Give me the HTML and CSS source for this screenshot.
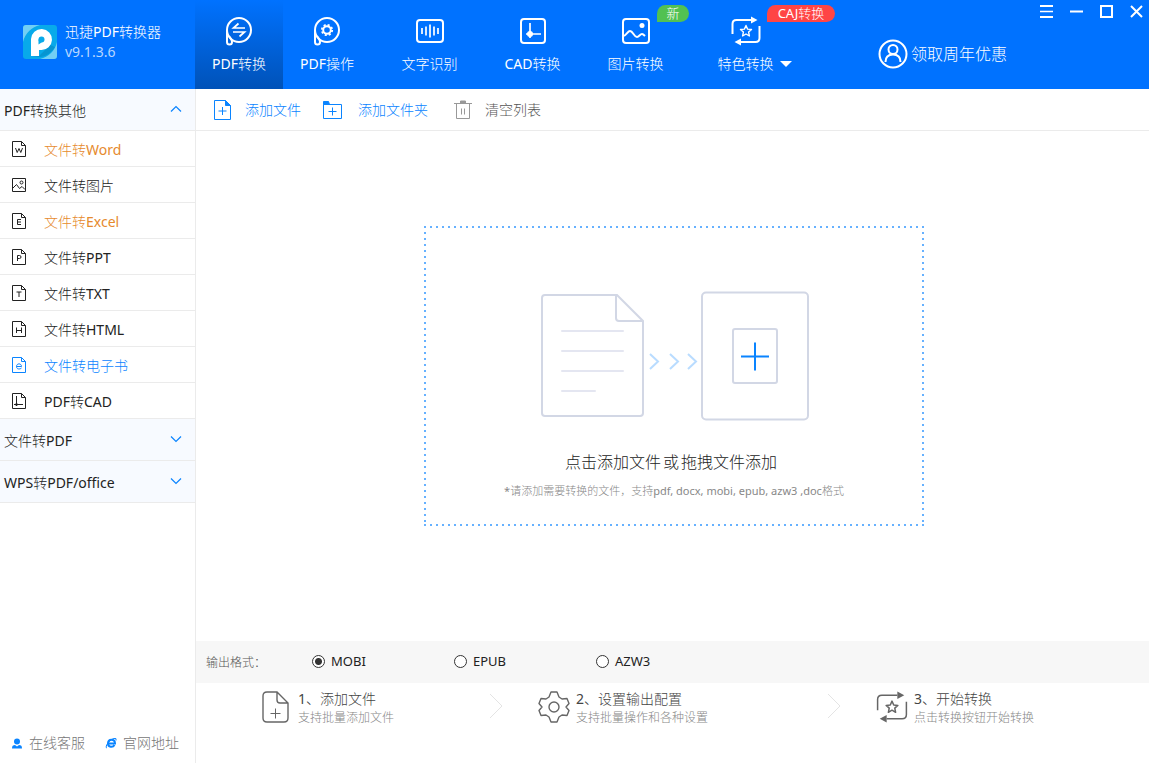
FILE: index.html
```html
<!DOCTYPE html>
<html lang="zh-CN">
<head>
<meta charset="utf-8">
<meta name="viewport" content="width=device-width, initial-scale=1">
<title>迅捷PDF转换器</title>
<link rel="stylesheet" href="styles.css">
</head>
<body>
<svg class="defs" aria-hidden="true">
  <symbol id="page" viewBox="0 0 16 18">
    <path d="M1.5 1.5h9l4 4v11h-13z" fill="none" stroke="currentColor" stroke-linejoin="round"/>
    <path d="M10.5 1.5v4h4" fill="none" stroke="currentColor"/>
  </symbol>
  <symbol id="swap" viewBox="0 0 30 30">
    <path d="M1.500 18V8q0-4 4-4H20M28.500 10v12q0 4-4 4H10" fill="none" stroke="currentColor"/>
    <path d="M20 .5l6.500 3.500-6.500 3.500zM10 22.500L3.500 26l6.500 3.500z" fill="currentColor"/>
    <path d="M15 9.500l1.600 3.600 3.900.4-2.900 2.600.8 3.900-3.400-2-3.400 2 .8-3.900-2.900-2.600 3.900-.4z" fill="none" stroke="currentColor" stroke-width="1.400" stroke-linejoin="round"/>
  </symbol>
  <symbol id="chevron" viewBox="0 0 12 8">
    <path d="M1 1.500l5 5 5-5" fill="none" stroke="currentColor" stroke-width="1.200"/>
  </symbol>
  <symbol id="arrow" viewBox="0 0 14 26">
    <path d="M1 1l12 12L1 25" fill="none" stroke="currentColor"/>
  </symbol>
</svg>

<div class="app">
  <header class="header">
    <div class="brand">
      <svg class="brand-logo" viewBox="0 0 34 34" aria-hidden="true">
        <rect width="34" height="34" rx="3" fill="#08aaea"/>
        <path d="M3 0h14A23 23 0 0 0 0 17V3a3 3 0 0 1 3-3zM34 17v14a3 3 0 0 1-3 3H17A22 22 0 0 0 34 17z" fill="#72cff4"/>
        <path d="M16 31l11-11 5 2c-3 5-8 9-14 10H10z" fill="#0795d1"/>
        <path d="M8 31V14a10.500 10.500 0 1 1 10 11h-2v6z" fill="#fff"/>
        <circle cx="18.500" cy="14.500" r="3" fill="#08aaea"/>
        <path d="M15.500 14.500h3v3l-3 2z" fill="#08aaea"/>
      </svg>
      <div class="brand-text">
        <h1 class="brand-name">迅捷PDF转换器</h1>
        <span class="brand-version">v9.1.3.6</span>
      </div>
    </div>
    <nav class="nav">
      <button class="nav-item active" type="button">
        <svg class="nav-icon" viewBox="0 0 30 30" fill="none" stroke="currentColor" stroke-width="2" aria-hidden="true">
          <circle cx="15" cy="14" r="12"/>
          <path d="M3 14v12q0 2.500 2.500 2.500T8 26q0-2-3-6"/>
          <path d="M21 12H9.500L14.500 7.500M9 16h11.500L15.500 20.500" stroke-width="1.700"/>
        </svg>
        <span class="nav-label">PDF转换</span>
      </button>
      <button class="nav-item" type="button">
        <svg class="nav-icon" viewBox="0 0 30 30" fill="none" stroke="currentColor" stroke-width="2" aria-hidden="true">
          <circle cx="15" cy="14" r="12"/>
          <path d="M3 14v12q0 2.500 2.500 2.500T8 26q0-2-3-6"/>
          <circle cx="15" cy="14" r="3.800"/>
          <circle cx="15" cy="14" r="5.200" stroke-width="1.800" stroke-dasharray="2.084 2"/>
        </svg>
        <span class="nav-label">PDF操作</span>
      </button>
      <button class="nav-item wide first" type="button">
        <svg class="nav-icon" viewBox="0 0 30 30" fill="none" stroke="currentColor" stroke-width="2" aria-hidden="true">
          <rect x="2" y="4" width="26" height="22" rx="3"/>
          <path d="M7 12v6M11 10.500v9M15 8.500v13M19 10.500v9M23 12v6" stroke-width="1.700"/>
        </svg>
        <span class="nav-label">文字识别</span>
      </button>
      <button class="nav-item wide" type="button">
        <svg class="nav-icon" viewBox="0 0 30 30" fill="none" stroke="currentColor" stroke-width="2" aria-hidden="true">
          <rect x="3" y="3" width="24" height="24" rx="3"/>
          <path d="M12 7v15M8 18h15" stroke-width="1.700"/>
          <circle cx="12" cy="18" r="3" fill="currentColor" stroke="none"/>
        </svg>
        <span class="nav-label">CAD转换</span>
      </button>
      <button class="nav-item wide" type="button">
        <svg class="nav-icon" viewBox="0 0 30 30" fill="none" stroke="currentColor" stroke-width="2" aria-hidden="true">
          <rect x="2" y="3" width="26" height="24" rx="3"/>
          <path d="M3 20c3-2 4-5 6-5 3 0 4 6 7 6 2 0 3-3 5-3 1 0 2 1 3 2"/>
          <circle cx="21" cy="9.500" r="2.500" fill="currentColor" stroke="none"/>
        </svg>
        <span class="nav-label">图片转换</span>
        <span class="badge green">新</span>
      </button>
      <button class="nav-item special" type="button">
        <svg class="nav-icon" aria-hidden="true"><use href="#swap"/></svg>
        <span class="nav-label">特色转换<span class="caret"></span></span>
        <span class="badge red">CAJ转换</span>
      </button>
    </nav>
    <button class="promo" type="button">
      <svg class="promo-icon" viewBox="0 0 30 30" fill="none" stroke="currentColor" stroke-width="2" aria-hidden="true">
        <circle cx="15" cy="15" r="13.500"/>
        <circle cx="15" cy="10.500" r="4.500"/>
        <path d="M7.500 23c0-5 3-7.500 7.500-7.500s7.500 2.500 7.500 7.500"/>
      </svg>
      领取周年优惠
    </button>
    <div class="window-controls">
      <button class="window-button" type="button" aria-label="菜单"><svg viewBox="0 0 14 14"><path d="M0 1h13M0 12h13"/><path d="M0 6.500h13" stroke-width="1.500"/></svg></button>
      <button class="window-button" type="button" aria-label="最小化"><svg viewBox="0 0 14 14"><path d="M0 6.500h13"/></svg></button>
      <button class="window-button" type="button" aria-label="最大化"><svg viewBox="0 0 14 14"><path d="M1 1h11v11H1z"/></svg></button>
      <button class="window-button" type="button" aria-label="关闭"><svg viewBox="0 0 14 14"><path d="M1 1l11 11M12 1L1 12"/></svg></button>
    </div>
  </header>

  <div class="body">
    <aside class="sidebar">
      <button class="group" type="button" aria-expanded="true">PDF转换其他<svg class="group-icon up" aria-hidden="true"><use href="#chevron"/></svg></button>
      <ul class="menu">
        <li><a class="menu-item hot" href="#word"><svg class="menu-icon" viewBox="0 0 16 18" aria-hidden="true"><use href="#page"/><path d="M4.500 8l1.700 4.500L8 8.500l1.800 4L11.500 8"/></svg>文件转Word</a></li>
        <li><a class="menu-item" href="#image"><svg class="menu-icon" viewBox="0 0 16 18" aria-hidden="true"><path d="M1.500 2.500h13v13h-13zM2 12l3.500-3.500 3 4 2.500-2 3 3"/><circle cx="10.500" cy="6.500" r="1.500"/></svg>文件转图片</a></li>
        <li><a class="menu-item hot" href="#excel"><svg class="menu-icon" viewBox="0 0 16 18" aria-hidden="true"><use href="#page"/><path d="M10 7.500H6.500v5H10M6.500 10H10"/></svg>文件转Excel</a></li>
        <li><a class="menu-item" href="#ppt"><svg class="menu-icon" viewBox="0 0 16 18" aria-hidden="true"><use href="#page"/><path d="M6.500 13V7.500h2q1.500 0 1.500 1.500t-1.500 1.500h-2"/></svg>文件转PPT</a></li>
        <li><a class="menu-item" href="#txt"><svg class="menu-icon" viewBox="0 0 16 18" aria-hidden="true"><use href="#page"/><path d="M5.500 8h5M8 8v5"/></svg>文件转TXT</a></li>
        <li><a class="menu-item" href="#html"><svg class="menu-icon" viewBox="0 0 16 18" aria-hidden="true"><use href="#page"/><path d="M5.500 7.500V13M10.500 7.500V13M5.500 10.500h5"/></svg>文件转HTML</a></li>
        <li><a class="menu-item current" href="#ebook" aria-current="page"><svg class="menu-icon" viewBox="0 0 16 18" aria-hidden="true"><use href="#page"/><path d="M5.500 10.500h5c0-3.500-5-3.500-5 0 0 3 3.500 3 5 1.500"/></svg>文件转电子书</a></li>
        <li><a class="menu-item" href="#cad"><svg class="menu-icon" viewBox="0 0 16 18" aria-hidden="true"><use href="#page"/><path d="M5.500 4v10M3 12.500h9"/><circle cx="5.500" cy="12.500" r="1"/></svg>PDF转CAD</a></li>
      </ul>
      <button class="group" type="button" aria-expanded="false">文件转PDF<svg class="group-icon" aria-hidden="true"><use href="#chevron"/></svg></button>
      <button class="group" type="button" aria-expanded="false">WPS转PDF/office<svg class="group-icon" aria-hidden="true"><use href="#chevron"/></svg></button>
      <div class="support">
        <a class="support-link" href="#service">
          <svg class="support-icon" viewBox="0 0 12 12" aria-hidden="true"><circle cx="6" cy="4.500" r="3" fill="currentColor"/><path d="M1 11.500c0-3 1-3.500 3-3.500l2 1.500L8 8c2 0 3 .5 3 3.500z" fill="currentColor"/></svg>
          在线客服
        </a>
        <a class="support-link" href="#site">
          <svg class="support-icon" viewBox="0 0 12 12" fill="none" stroke="currentColor" aria-hidden="true"><path d="M3 6.500h7c0-5-7-5-7 0 0 4 5 4 6.500 1.500" stroke-width="2"/><path d="M2 11C-.5 11 3 3 9 1.500q3-.7 2 2" /></svg>
          官网地址
        </a>
      </div>
    </aside>

    <main class="main">
      <div class="toolbar">
        <button class="tool add-file" type="button">
          <svg class="tool-icon" viewBox="0 0 20 22" aria-hidden="true"><path d="M1.500 1.500h11l5 5v14h-16zM9.500 8v8M5.500 12h8"/><path d="M12.500 1.500v5h5z" fill="currentColor"/></svg>添加文件
        </button>
        <button class="tool add-folder" type="button">
          <svg class="tool-icon" viewBox="0 0 20 22" aria-hidden="true"><path d="M.5 5.500h18v14H.5zM9.500 8.500v8M5.500 12.500h8"/><path d="M.5 5.500v-3h5l1 3z" fill="currentColor"/></svg>添加文件夹
        </button>
        <button class="tool clear" type="button">
          <svg class="tool-icon" viewBox="0 0 20 22" aria-hidden="true"><path d="M1 4.500h18M3.500 4.500v15h13v-15M8.500 9.500v6M11.500 9.500v6"/><path d="M7.500 4V2h5v2z" fill="currentColor"/></svg><span class="clear-text">清空列表</span>
        </button>
      </div>

      <section class="workspace">
        <button class="dropzone" type="button">
          <svg class="drop-art" viewBox="0 0 268 130" fill="none" stroke="#d2d7e5" stroke-width="2" aria-hidden="true">
            <path d="M76 4H4Q1 4 1 7v115q0 3 3 3h95q3 0 3-3V30zM75 4v23q0 3 3 3h24"/>
            <path d="M21 40h61M21 60h61M21 80h61M21 100h33" stroke="#e4e6f1" stroke-linecap="round"/>
            <path d="M109 63l8 7.500-8 7.500M129 63l8 7.500-8 7.500M147 63l8 7.500-8 7.500" stroke="#b9dcff"/>
            <rect x="161" y="1.500" width="106" height="127" rx="4"/>
            <rect x="192" y="38" width="44" height="54" rx="2"/>
            <path d="M200 65.500h28M214 51.500v28" stroke="#0a84ff"/>
          </svg>
          <span class="drop-title">点击添加文件<span class="drop-or">或</span>拖拽文件添加</span>
          <span class="drop-hint">*请添加需要转换的文件，支持pdf, docx, mobi, epub, azw3 ,doc格式</span>
        </button>
      </section>

      <div class="formats" role="radiogroup" aria-labelledby="format-label">
        <span class="formats-label" id="format-label">输出格式：</span>
        <label class="format"><input class="radio" type="radio" name="format" checked>MOBI</label>
        <label class="format"><input class="radio" type="radio" name="format">EPUB</label>
        <label class="format"><input class="radio" type="radio" name="format">AZW3</label>
      </div>

      <div class="steps">
        <div class="step">
          <svg class="step-icon" viewBox="0 0 32 32" fill="none" stroke="currentColor" aria-hidden="true"><path d="M17 1H7Q3 1 3 5v22q0 4 4 4h17q4 0 4-4V12zM17 1v8q0 3 3 3h8"/><path d="M15.500 17.500v10M10.500 22.500h10" stroke-width="1"/></svg>
          <div><h2 class="step-title">1、添加文件</h2><p class="step-text">支持批量添加文件</p></div>
          <svg class="step-arrow" aria-hidden="true"><use href="#arrow"/></svg>
        </div>
        <div class="step">
          <svg class="step-icon" viewBox="0 0 32 32" fill="none" stroke="currentColor" stroke-linejoin="round" aria-hidden="true"><path d="M13 1h6l2 5 3 2 5-.5 2 5-3 3.500 3 3.500-2 5-5-.5-3 2-2 5h-6l-2-5-3-2-5 .5-2-5L4 16l-3-3.500 2-5 5 .5 3-2z"/><circle cx="16" cy="16" r="5"/></svg>
          <div><h2 class="step-title">2、设置输出配置</h2><p class="step-text">支持批量操作和各种设置</p></div>
          <svg class="step-arrow" aria-hidden="true"><use href="#arrow"/></svg>
        </div>
        <div class="step">
          <svg class="step-icon" aria-hidden="true"><use href="#swap"/></svg>
          <div><h2 class="step-title">3、开始转换</h2><p class="step-text">点击转换按钮开始转换</p></div>
        </div>
      </div>
    </main>
  </div>
</div>
</body>
</html>
```
FILE: styles.css
```css
* {
  box-sizing: border-box;
}

body {
  margin: 0;
  background: #fff;
  color: #222;
  font: 400 14px/20px "Noto Sans", "Noto Sans CJK SC Light", "Noto Sans CJK SC", sans-serif;
}

button {
  margin: 0;
  padding: 0;
  border: 0;
  background: none;
  color: inherit;
  font: inherit;
  cursor: pointer;
}

a {
  color: inherit;
  text-decoration: none;
}

h1,
h2,
p {
  margin: 0;
  font-weight: inherit;
}

svg {
  flex: none;
}

.defs {
  position: absolute;
  width: 0;
  height: 0;
}

.app {
  display: flex;
  flex-direction: column;
  min-height: 100vh;
}

/* Header */

.header {
  display: flex;
  background: #0072ff;
  color: #fff;
}

.brand {
  display: flex;
  gap: 8px;
  width: 195px;
  padding: 22px 0 0 23px;
}

.brand-logo {
  width: 34px;
  height: 34px;
  margin-top: 3px;
}

.brand-name {
  font-size: 14px;
  line-height: 20px;
}

.brand-version {
  display: block;
  color: #b8d7ff;
  line-height: 20px;
}

.nav {
  display: flex;
}

.nav-item {
  position: relative;
  display: flex;
  flex-direction: column;
  align-items: center;
  gap: 8px;
  width: 88px;
  padding: 16px 0 15px;
}

.nav-item.active {
  background: linear-gradient(#0072ff, #0052b8);
}

.nav-item.wide {
  width: 103px;
}

.nav-item.first {
  margin-left: 7px;
}

.nav-item.special {
  width: 117px;
}

.nav-icon {
  width: 30px;
  height: 30px;
  stroke-width: 2;
}

.nav-label {
  display: grid;
  grid-template-columns: 1fr auto 1fr;
  align-items: center;
  width: 100%;
}

.nav-label::before {
  content: "";
}

.caret {
  width: 12px;
  margin-left: 6px;
  border: 6px solid transparent;
  border-top-color: #fff;
  border-bottom: 0;
}

.badge {
  position: absolute;
  top: 5px;
  left: 73px;
  width: 32px;
  border-radius: 9px 9px 9px 0;
  font-size: 13px;
  line-height: 17px;
  text-align: center;
}

.badge.green {
  background: #52c152;
}

.badge.red {
  left: 80px;
  width: 68px;
  background: #ff4545;
  white-space: nowrap;
}

.promo {
  display: flex;
  align-items: center;
  gap: 3px;
  margin-left: 74px;
  padding-top: 18px;
  font-size: 16px;
  white-space: nowrap;
}

.promo-icon {
  width: 30px;
  height: 30px;
}

.window-controls {
  display: flex;
  gap: 16px;
  margin-left: auto;
  padding: 5px 5px 0 0;
}

.window-button {
  display: flex;
  width: 14px;
  height: 14px;
}

.window-button svg {
  width: 14px;
  height: 14px;
  fill: none;
  stroke: #fff;
  stroke-width: 2;
}

/* Sidebar */

.body {
  display: flex;
  flex: 1;
}

.sidebar {
  display: flex;
  flex-direction: column;
  width: 196px;
  border-right: 1px solid #ebebeb;
}

.group {
  display: flex;
  align-items: center;
  justify-content: space-between;
  height: 42px;
  padding: 2px 13px 0 4px;
  border-bottom: 1px solid #ebebeb;
  background: #f7faff;
}

.group-icon {
  width: 12px;
  height: 8px;
  margin-bottom: 4px;
  color: #0a84ff;
}

.group-icon.up {
  transform: rotate(180deg);
}

.menu {
  margin: 0;
  padding: 0;
  list-style: none;
}

.menu-item {
  display: flex;
  align-items: center;
  gap: 17px;
  height: 36px;
  padding: 2px 0 0 11px;
  border-bottom: 1px solid #ebebeb;
}

.menu-item.hot {
  color: #e68a2e;
}

.menu-item.current {
  color: #0a84ff;
}

.menu-icon {
  width: 16px;
  height: 18px;
  margin-bottom: 2px;
  fill: none;
  stroke: currentColor;
  color: #222;
}

.current .menu-icon {
  color: #0a84ff;
}

.support {
  display: flex;
  gap: 20px;
  margin-top: auto;
  padding: 0 0 10px 11px;
  color: #777;
}

.support-link {
  display: flex;
  align-items: center;
  gap: 6px;
}

.support-icon {
  width: 12px;
  height: 12px;
  color: #0a84ff;
}

/* Main area */

.main {
  display: flex;
  flex: 1;
  flex-direction: column;
  min-width: 0;
}

.toolbar {
  display: flex;
  align-items: center;
  height: 42px;
  padding-left: 17px;
  border-bottom: 1px solid #ebebeb;
}

.tool {
  display: flex;
  align-items: center;
  gap: 12px;
  color: #0a84ff;
}

.tool.add-folder {
  gap: 15px;
  margin: 0 25px 0 22px;
}

.tool.clear {
  color: #999;
}

.clear-text {
  color: #555;
}

.tool-icon {
  width: 20px;
  height: 22px;
  fill: none;
  stroke: currentColor;
}

.workspace {
  display: flex;
  flex: 1;
  align-items: center;
  justify-content: center;
  padding: 0 0 20px 3px;
}

.dropzone {
  display: flex;
  flex-direction: column;
  align-items: center;
  width: 500px;
  padding: 65px 0 25px;
  background:
    repeating-linear-gradient(90deg, #66b1ff 0 2px, transparent 2px 6px) 0 0 / 100% 2px no-repeat,
    repeating-linear-gradient(90deg, #66b1ff 0 2px, transparent 2px 6px) 0 100% / 100% 2px no-repeat,
    repeating-linear-gradient(#66b1ff 0 2px, transparent 2px 6px) 0 0 / 2px 100% no-repeat,
    repeating-linear-gradient(#66b1ff 0 2px, transparent 2px 6px) 100% 0 / 2px 100% no-repeat;
}

.drop-art {
  width: 268px;
  height: 130px;
  margin-left: 2px;
}

.drop-title {
  margin-top: 29px;
  margin-right: 6px;
  font-size: 16px;
  line-height: 24px;
}

.drop-or {
  margin: 0 2px;
}

.drop-hint {
  margin-top: 7px;
  color: #888;
  font-size: 11px;
  line-height: 20px;
}

/* Output format */

.formats {
  display: flex;
  align-items: center;
  height: 42px;
  padding: 0 0 2px 10px;
  background: #f7f7f7;
}

.formats-label {
  width: 106px;
  padding-top: 4px;
  color: #555;
  font-size: 12px;
}

.format {
  display: flex;
  align-items: center;
  gap: 6px;
  width: 142px;
  font-size: 13px;
}

.radio {
  width: 13px;
  height: 13px;
  margin: 0;
  border: 1px solid #333;
  border-radius: 50%;
  background: #fff;
  appearance: none;
}

.radio:checked {
  background: radial-gradient(#333 0 3px, #fff 4px);
}

/* Steps */

.steps {
  display: grid;
  grid-template-columns: 278fr 338fr 273fr;
  height: 80px;
  padding: 6px 0 0 64px;
  color: #666;
}

.step {
  display: flex;
  align-items: flex-start;
  gap: 6px;
}

.step-icon {
  width: 32px;
  height: 32px;
  margin-top: 2px;
  stroke-width: 1.4px;
}

.step-title {
  color: #444;
  font-size: 14px;
  line-height: 20px;
}

.step-text {
  color: #888;
  font-size: 12px;
  line-height: 18px;
}

.step-arrow {
  width: 14px;
  height: 26px;
  margin: 4px 35px 0 auto;
  color: #e4e4e4;
}
```
